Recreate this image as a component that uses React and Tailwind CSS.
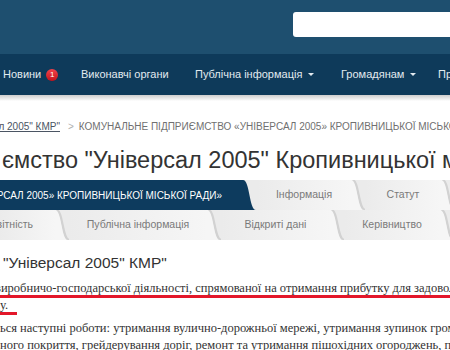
import { useState } from 'react'

function Curve({ left, right, dark }) {
  // curved right edge of a tab
  return (
    <svg width="14" height="30" viewBox="0 0 14 30" className="shrink-0 block">
      <rect x="0" y="0" width="14" height="30" fill={right} />
      {!dark && <path d="M1,0 C8,0 7,30 14,30" fill="none" stroke="#d2d2d2" strokeWidth="2.5" />}
      <path d="M0,0 C7,0 6,30 13,30 L0,30 Z" fill={left} />
    </svg>
  )
}

function Tab({ label, w, last }) {
  return (
    <>
      <div className={`${w} shrink-0 h-full flex items-center justify-center bg-gradient-to-r from-[#ebebeb] to-[#f6f6f6] text-[10.5px] text-[#7a7a7a]`}>
        {label}
      </div>
      <Curve left="#f6f6f6" right={last ? '#ffffff' : '#ebebeb'} />
    </>
  )
}

function Caret() {
  return <span className="ml-[6px] border-x-[3px] border-x-transparent border-t-[3px] border-t-[#e2eaf0]" />
}

export default function App() {
  const [newsCount] = useState(1)

  return (
    <div className="w-[450px] h-[350px] overflow-hidden bg-white font-['Liberation_Sans',Arial,sans-serif]">
      {/* Header */}
      <header className="h-[54px] bg-[#1e4f6f] flex items-start justify-end pt-[12px]">
        <div className="w-[157px] h-[25px] bg-white rounded-l-[3px]" />
      </header>

      {/* Main nav */}
      <nav className="h-[41px] bg-[#0e3a5a] flex items-center pl-[3px] text-[11px] text-[#e2eaf0] whitespace-nowrap">
        <div className="w-[78px] shrink-0 flex items-center">
          <span>Новини</span>
          <span className="ml-[5px] w-[12px] h-[12px] rounded-full bg-gradient-to-b from-[#f2414a] to-[#c4101a] text-white text-[8px] leading-[12px] text-center">{newsCount}</span>
        </div>
        <div className="w-[114px] shrink-0">Виконавчі органи</div>
        <div className="w-[146px] shrink-0 flex items-center">
          <span>Публічна інформація</span>
          <Caret />
        </div>
        <div className="w-[97px] shrink-0 flex items-center">
          <span>Громадянам</span>
          <Caret />
        </div>
        <div className="shrink-0">Про місто</div>
      </nav>
      <div className="h-[6px] bg-gradient-to-b from-[#cdcdcd] to-white" />

      {/* Breadcrumb */}
      <div className="mt-[20px] flex items-center h-[12px] text-[10px] leading-[12px] whitespace-nowrap">
        <div className="w-[60px] shrink-0 flex justify-end overflow-hidden">
          <a className="text-[#4b5563] underline shrink-0">КП "Універсал 2005" КМР"</a>
        </div>
        <span className="ml-[8px] text-[#b0b0b0]">&gt;</span>
        <span className="ml-[5px] text-[#707070] uppercase">Комунальне підприємство «Універсал 2005» Кропивницької міської ради</span>
      </div>

      {/* Title */}
      <h1 className="mt-[14px] pl-[2px] text-[23.5px] leading-[26px] text-[#333] whitespace-nowrap">
        ємство "Універсал 2005" Кропивницької міської ради
      </h1>

      {/* Tabs */}
      <div className="mt-[7px] flex flex-col">
        <div className="h-[30px] flex whitespace-nowrap overflow-hidden">
          <div className="w-[243px] shrink-0 h-full flex items-center justify-end overflow-hidden bg-[#0d3b5e] pr-[21px] text-[10px] text-white">
            <span className="shrink-0">КОМУНАЛЬНЕ ПІДПРИЄМСТВО «УНІВЕРСАЛ 2005» КРОПИВНИЦЬКОЇ МІСЬКОЇ РАДИ»</span>
          </div>
          <Curve left="#0d3b5e" right="#ebebeb" dark />
          <Tab label="Інформація" w="w-[94px]" />
          <Tab label="Статут" w="w-[76px]" />
        </div>
        <div className="h-[30px] flex whitespace-nowrap overflow-hidden">
          <div className="w-[55px] shrink-0 h-full flex items-center justify-end overflow-hidden bg-gradient-to-r from-[#ebebeb] to-[#f6f6f6] pr-[22px] text-[10.5px] text-[#7a7a7a]">
            <span className="shrink-0">Звітність</span>
          </div>
          <Curve left="#f6f6f6" right="#ebebeb" />
          <Tab label="Публічна інформація" w="w-[138px]" />
          <Tab label="Відкриті дані" w="w-[109px]" />
          <Tab label="Керівництво" w="w-[96px]" />
        </div>
      </div>

      {/* Subtitle */}
      <h2 className="mt-[14px] pl-[3px] text-[15.5px] leading-[18px] text-[#333] whitespace-nowrap">
        "Універсал 2005" КМР"
      </h2>

      {/* Text */}
      <div className="mt-[8px] font-['Liberation_Serif','Times_New_Roman',serif] text-[12.5px] leading-[17px] text-[#333] whitespace-nowrap">
        <div className="relative">
          <p className="-ml-[5px] w-[470px] [text-align-last:justify]">
            виробничо-господарської діяльності, спрямованої на отримання прибутку для задоволення
          </p>
          <div className="absolute left-0 right-0 top-[15px] h-[3px] bg-[#e3172a]" />
        </div>
        <div className="relative">
          <p>у.</p>
          <div className="absolute left-0 w-[17px] top-[15px] h-[3px] bg-[#e3172a]" />
        </div>
        <p className="mt-[6px] w-[461px] [text-align-last:justify]">
          ься наступні роботи: утримання вулично-дорожньої мережі,  утримання зупинок громадського
        </p>
        <p className="w-[461px] [text-align-last:justify]">
          ного покриття, грейдерування доріг, ремонт та утримання пішохідних огороджень, прибирання
        </p>
      </div>
    </div>
  )
}
